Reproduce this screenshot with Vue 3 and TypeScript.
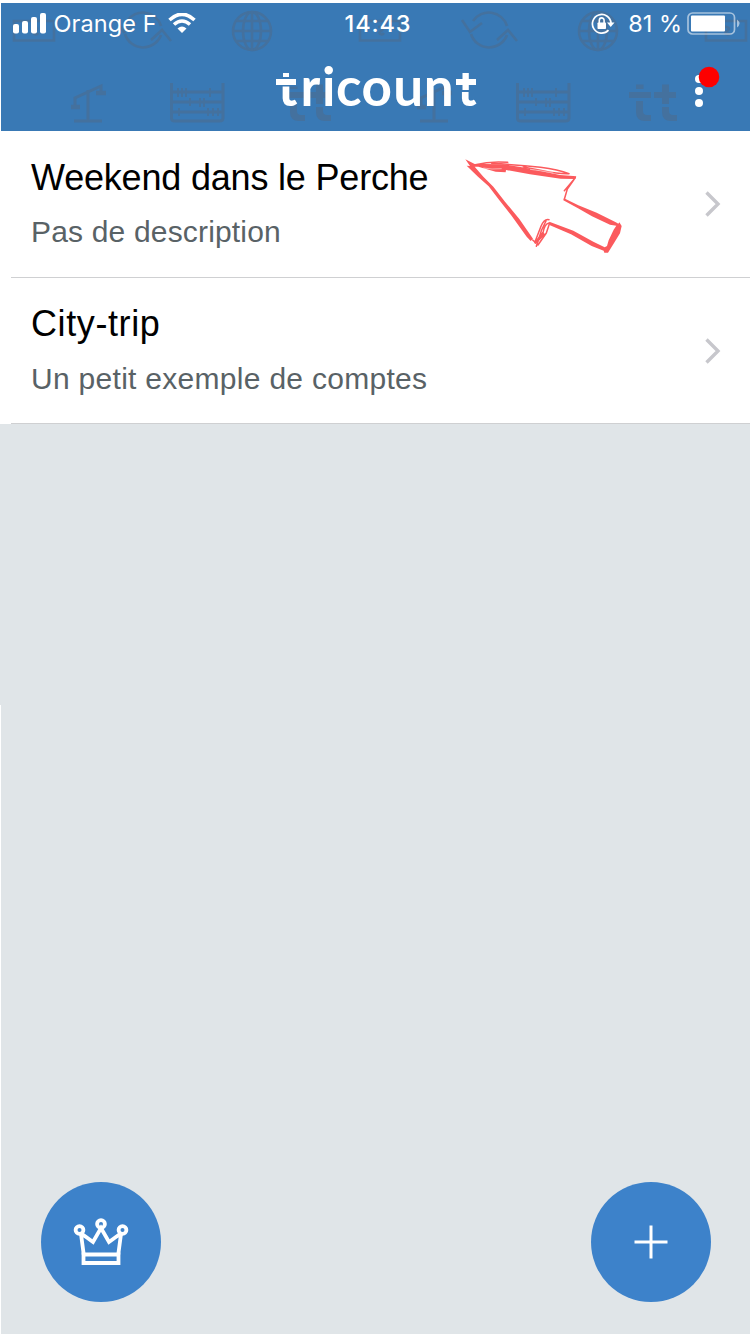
<script setup lang="ts">
interface Tricount {
  id: number
  title: string
  description: string
}

const tricounts: Tricount[] = [
  { id: 1, title: 'Weekend dans le Perche', description: 'Pas de description' },
  { id: 2, title: 'City-trip', description: 'Un petit exemple de comptes' },
]

const motifOffsets: number[] = [-346, 0, 346]
</script>

<template>
  <div class="screen">
    <header class="header">
      <svg class="motifs" width="749" height="128" viewBox="1 3 749 128" aria-hidden="true">
        <g v-for="dx in motifOffsets" :key="dx" :transform="`translate(${dx} 0)`">
          <g fill="none" stroke="#44719e" stroke-width="2.6">
            <path d="M360 21h40v19.500h-40zM378 27c4-1 7 2 3 4s1 5 3 2" />
            <path d="M473 21a19 19 0 0 1 34 5M507 35a19 19 0 0 1-36-1M462 20l8 12 12-9M497 40l11-10 9 11" />
            <circle cx="252" cy="31" r="19" />
            <ellipse cx="252" cy="31" rx="9" ry="19" />
            <path d="M252 12v38M233 31h38M237 21h30M237 41h30" />
          </g>
          <g fill="none" stroke="#44719e" stroke-width="3">
            <path d="M74 121h28M88 121V90M75 106v-8l26-12v6" />
            <path d="M71 107h9M96 93h10" stroke-width="4.500" />
            <path d="M171.500 83v35q0 3 3 3h45q3.500 0 3.500-3V83M171 92h53M171 102h53M171 112h53" />
            <path d="M178 88v9M182 88v9M186 88v9M210 88v9M190 98v8M200 98v9M204 98v9M179 108v8M208 108v8M213 108v8M218 108v8" stroke-width="2" />
          </g>
          <g fill="#44719e">
            <path d="M290 84.500h7.500v4.500h-7.500zM283 92h22v6h-22zM290 101h7v10q0 4 4 4h4v6h-6q-9 0-9-9z" />
            <path d="M316 84.500h7V92h7v6h-7v6h-7v-6h-8v-6h8zM316 107h7v4q0 4 4 4h4v6h-6q-9 0-9-9z" />
          </g>
        </g>
      </svg>

      <div class="status">
        <div class="status-left">
          <svg class="signal" width="34" height="22" viewBox="0 0 34 22" fill="#fff">
            <rect x="1" y="11" width="6" height="9.500" rx="2" />
            <rect x="10" y="8" width="6" height="12.500" rx="2" />
            <rect x="19" y="4" width="6" height="16.500" rx="2" />
            <rect x="28" y="0" width="6" height="20.500" rx="2" />
          </svg>
          <span class="carrier">Orange F</span>
          <svg class="wifi" width="28" height="21" viewBox="0 0 28 21">
            <path d="M1.500 7Q14-4.500 26.500 7M6 11.500q8-7 16 0" fill="none" stroke="#fff" stroke-width="3.600" />
            <path d="M9.500 15.500q4.500-4 9 0L14 20z" fill="#fff" />
          </svg>
        </div>
        <span class="clock">14:43</span>
        <div class="status-right">
          <svg class="lock" width="24" height="22" viewBox="0 0 24 22">
            <path d="M17.500 17.200A9.300 9.300 0 1 1 20 10" fill="none" stroke="#fff" stroke-width="1.700" />
            <path d="M16 9.500h7.500L19.700 14z" fill="#fff" />
            <rect x="6.500" y="9.500" width="8.500" height="6.500" rx=".8" fill="#fff" />
            <path d="M8.300 10V7.500a2.400 2.600 0 0 1 4.800 0V10" fill="none" stroke="#fff" stroke-width="1.600" />
          </svg>
          <span class="percent">81 %</span>
          <svg class="battery" width="54" height="24" viewBox="0 0 54 24">
            <rect x="1" y="1" width="46.500" height="21" rx="4.500" fill="none" stroke="#fff" stroke-opacity=".55" stroke-width="1.700" />
            <rect x="4" y="3.500" width="34" height="16" rx="1" fill="#fff" />
            <path d="M50 7.500q5 4 0 8z" fill="#fff" fill-opacity=".55" />
          </svg>
        </div>
      </div>

      <div class="brand">
        <svg width="204" height="67" viewBox="274 54 204 67" role="img" aria-label="tricount">
          <text class="wordmark" y="106.300" x="277.800 300.500 322 336 361.500 393.300 423.800 457">tricount</text>
          <g fill="#3979b5">
            <rect x="276" y="69" width="22" height="17.500" />
            <rect x="455" y="69" width="23" height="21" />
          </g>
          <g fill="#fff">
            <rect x="283" y="73" width="6" height="4" />
            <rect x="276" y="79" width="20" height="6" />
            <path d="M462.500 73h6.300v6h7.200v6h-7.200v5h-6.300v-5H456v-6h6.500z" />
          </g>
          <rect x="458" y="90" width="16" height="2" fill="#3979b5" />
        </svg>
        <svg class="menu" width="26" height="42" viewBox="0 0 26 42" aria-label="menu">
          <g fill="#fff">
            <circle cx="5" cy="13" r="4" />
            <circle cx="5" cy="25" r="4" />
            <circle cx="5" cy="37" r="4" />
          </g>
          <circle cx="15" cy="11" r="10.300" fill="#fd0000" />
        </svg>
      </div>
    </header>

    <main class="list">
      <article v-for="item in tricounts" :key="item.id" class="row">
        <div class="texts">
          <h2 :class="['title', `title-${item.id}`]">{{ item.title }}</h2>
          <p :class="['description', `description-${item.id}`]">{{ item.description }}</p>
        </div>
        <svg class="chevron" width="18" height="28" viewBox="0 0 18 28">
          <path d="M2.500 2.500L14 14 2.500 25.500" fill="none" stroke="#c7c7cc" stroke-width="3.400" />
        </svg>
      </article>
    </main>

    <svg class="pointer" width="180" height="115" viewBox="0 0 540 345" aria-hidden="true">
      <g fill="#fb5a5d">
        <path d="M46 43L74 57 100 57 160 58 225 68 330 90 379 94 375 102 332 101 240 88 168 75 167 82 137 80 85 65 74 65 100 95 130 125 165 170 208 222 249 281 242 288 230 275 183 210 147 164 116 124 84 95 50 62 60 63z" />
        <path d="M342 160L385 181 440 203 496 231 505 236 508 232 515 243 510 265 494 291 474 323 463 323 461 317 425 303 363 268 300 241 296 238 298 230 370 257 430 290 464 307 471 303 476 286 491 254 499 242 480 239 426 214 384 190 340 166z" />
      </g>
      <g fill="none" stroke="#fb5a5d" stroke-linecap="round" stroke-linejoin="round">
        <path d="M76 59Q120 48 173 52M125 55Q205 60 271 67Q325 74 357 86Q325 87 282 78L220 66" stroke-width="4.500" />
        <path d="M376 98L343 137M372 104L352 132 343 163" stroke-width="4.500" />
        <path d="M297 224Q283 220 273 244L256 288M288 228L274 257 259 304M298 237L289 264 264 300M297 234Q284 236 279 263L267 278M248 285L256 292 283 268" stroke-width="4.500" />
        <path d="M278 266L271 277 257 292" stroke-width="9" />
      </g>
      <path d="M100 69Q125 74 155 71M240 73Q275 77 310 84" fill="none" stroke="#fff" stroke-width="1.500" />
    </svg>

    <footer class="actions">
      <button class="fab" aria-label="Premium">
        <svg width="56" height="50" viewBox="0 0 56 50" fill="none" stroke="#fff" stroke-width="3.800">
          <circle cx="6.500" cy="13" r="3.900" />
          <circle cx="28" cy="7" r="3.900" />
          <circle cx="49.500" cy="13" r="3.900" />
          <path d="M8 17L10.800 38M48 17L45.200 38M9 17L20 25 28 11 36 25 47 17" />
          <path d="M10.500 37.500h35v8.500h-35z" />
        </svg>
      </button>
      <button class="fab" aria-label="Ajouter">
        <svg width="34" height="34" viewBox="0 0 34 34">
          <path d="M17 .5v33M.5 17h33" stroke="#fff" stroke-width="3" />
        </svg>
      </button>
    </footer>
  </div>
</template>

<style>
body {
  margin: 0;
  background: #fff;
}
</style>

<style scoped>
.screen {
  position: relative;
  display: flex;
  flex-direction: column;
  box-sizing: border-box;
  width: 750px;
  height: 1334px;
  padding-top: 3px;
  overflow: hidden;
  background:
    linear-gradient(#e0e5e8, #e0e5e8) 0 424px / 1px 281px no-repeat,
    linear-gradient(#e0e5e8, #e0e5e8) 1px 424px / 749px 910px no-repeat,
    #fff;
  font-family: "Liberation Sans", Arial, sans-serif;
}
.header {
  position: relative;
  flex: none;
  height: 128px;
  margin-left: 1px;
  background: #3979b5;
  color: #fff;
}
.motifs {
  position: absolute;
  inset: 0;
}
.status {
  position: relative;
  display: grid;
  grid-template-columns: 1fr auto 1fr;
  align-items: center;
  height: 41px;
  padding: 0 9px 0 11px;
  font: 400 23.500px/30px Inter, sans-serif;
}
.status-left,
.status-right {
  display: flex;
  align-items: center;
}
.status-right {
  justify-content: flex-end;
}
.carrier {
  margin-left: 7.500px;
  letter-spacing: 0.1px;
}
.wifi {
  margin-left: 11px;
}
.clock {
  padding-left: 3px;
  font-weight: 500;
  letter-spacing: 0.9px;
}
.percent {
  margin: 0 5px 0 13px;
  white-space: nowrap;
}
.brand {
  position: relative;
  display: flex;
  align-items: center;
  justify-content: space-between;
  height: 67px;
  margin-top: 10px;
  padding: 0 30px 0 273px;
}
.wordmark {
  font: 700 53px Lato, sans-serif;
  fill: #fff;
}
.menu {
  margin-bottom: 2px;
}
.row {
  position: relative;
  display: flex;
  align-items: center;
  justify-content: space-between;
  box-sizing: border-box;
  height: 146.500px;
  padding: 0 28px 0 31px;
  background: #fff;
}
.row::after {
  content: "";
  position: absolute;
  right: 0;
  bottom: 0;
  left: 11px;
  height: 1px;
  background: #cfd0d2;
}
.texts {
  padding-bottom: 1.500px;
}
.title,
.description {
  margin: 0;
  font-weight: 400;
  white-space: nowrap;
}
.title {
  color: #000;
  font-size: 36px;
  line-height: 42px;
  letter-spacing: -0.190px;
}
.title-2 {
  letter-spacing: 0.600px;
}
.description {
  margin-top: 15.500px;
  color: #596266;
  font-size: 30px;
  line-height: 36px;
  letter-spacing: 0.170px;
}
.description-2 {
  letter-spacing: 0.290px;
}
.pointer {
  position: absolute;
  top: 145px;
  left: 450px;
}
.actions {
  display: flex;
  justify-content: space-between;
  margin-top: auto;
  padding: 0 39px 32px 41px;
}
.fab {
  display: grid;
  place-items: center;
  width: 120px;
  height: 120px;
  padding: 0;
  border: 0;
  border-radius: 50%;
  background: #3d82ca;
}
</style>
